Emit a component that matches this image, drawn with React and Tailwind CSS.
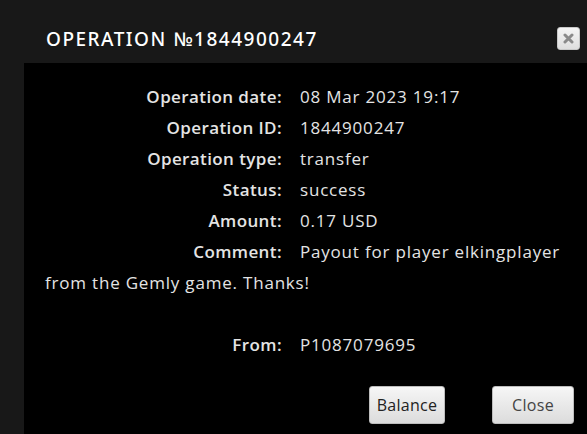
import React from "react";

const rows = [
  ["Operation date:", "08 Mar 2023 19:17"],
  ["Operation ID:", "1844900247"],
  ["Operation type:", "transfer"],
  ["Status:", "success"],
  ["Amount:", "0.17 USD"],
];

export default function App() {
  return (
    <div className="w-[587px] h-[434px] bg-[#181818] flex flex-col overflow-hidden" style={{ fontFamily: "'Open Sans', sans-serif" }}>
      <div className="h-[63px] flex items-start justify-between pl-[46px] pr-[7px] pt-[27px]">
        <div className="text-[19px] leading-[22px] font-medium tracking-[1.5px] text-white mt-[1px]" style={{ fontFamily: "'Noto Sans', sans-serif" }}>
          OPERATION №1844900247
        </div>
        <button className="w-[23px] h-[23px] rounded-[3px] bg-gradient-to-b from-[#f4f4f4] to-[#dedede] border border-[#c8c8c8] flex items-center justify-center">
          <svg width="11" height="11" viewBox="0 0 11 11">
            <path d="M2 2 L9 9 M9 2 L2 9" stroke="#8a8a8a" strokeWidth="3" strokeLinecap="round" />
          </svg>
        </button>
      </div>
      <div className="ml-[24px] flex-1 bg-black pl-[21px] pr-[20px] pt-[18px] text-[17px] tracking-[0.8px] text-[#e4e4e4]">
        {rows.map(([k, v]) => (
          <div key={k} className="flex h-[31px] items-center">
            <div className="w-[237px] text-right font-semibold mr-[18px] tracking-[0.4px]">{k}</div>
            <div>{v}</div>
          </div>
        ))}
        <div className="leading-[31px]">
          <span className="inline-block w-[237px] text-right font-semibold mr-[18px] tracking-[0.4px]">Comment:</span>
          Payout for player elkingplayer from the Gemly game. Thanks!
        </div>
        <div className="h-[31px]" />
        <div className="flex h-[31px] items-center">
          <div className="w-[237px] text-right font-semibold mr-[18px] tracking-[0.4px]">From:</div>
          <div>P1087079695</div>
        </div>
        <div className="flex justify-end gap-[47px] mt-[26px] tracking-[0.3px]">
          <button className="h-[38px] w-[76px] rounded-[3px] bg-gradient-to-b from-[#f6f6f6] to-[#dcdcdc] border border-[#bdbdbd] text-[#222] text-[16px]">
            Balance
          </button>
          <button className="h-[38px] w-[82px] rounded-[3px] bg-gradient-to-b from-[#f6f6f6] to-[#dcdcdc] border border-[#bdbdbd] text-[#444] text-[16px] mr-[-7px]">
            Close
          </button>
        </div>
      </div>
    </div>
  );
}
